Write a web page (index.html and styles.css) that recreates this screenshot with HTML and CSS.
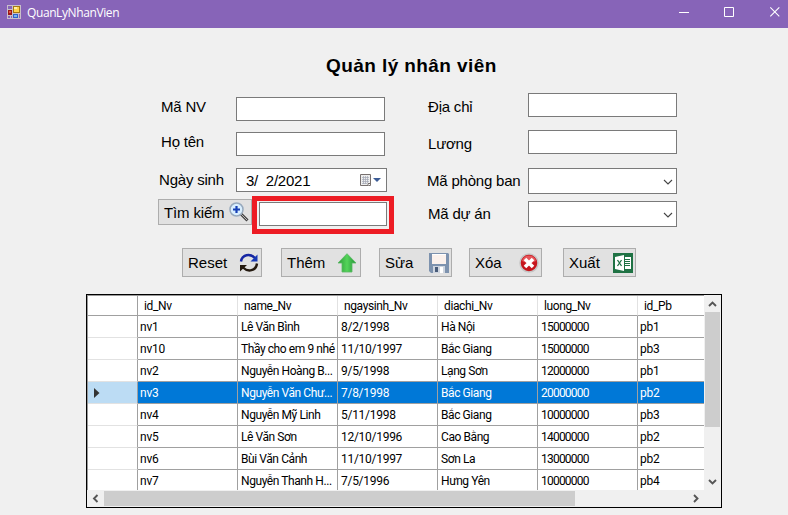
FILE: index.html
```html
<!DOCTYPE html>
<html lang="vi">
<head>
<meta charset="utf-8">
<title>QuanLyNhanVien</title>
<link rel="stylesheet" href="styles.css">
</head>
<body>
<header class="titlebar">
  <svg class="app-icon" width="14" height="14" viewBox="0 0 14 14">
    <path fill="#c9bfc9" d="M0 0h14v14H0z"/>
    <path fill="#8764b8" d="M1 1h4v3H1zM1 11h2v2H1zM4 11h1v2H4zM12 9h1v4h-1z"/>
    <path fill="#9b1717" d="M1 5h4v5H1z"/><path fill="#e05540" d="M2 6h2v2H2z"/>
    <path fill="#a67813" d="M6 1h7v7H6z"/><path fill="#ffd34d" d="M7 2h5v5H7z"/><path fill="#fff1a5" d="M7 2h3v2H7z"/>
    <path fill="#2f63c5" d="M6 9h5v4H6z"/><path fill="#79b1f5" d="M7 10h3v2H7z"/>
  </svg>
  <span class="caption">QuanLyNhanVien</span>
  <svg class="window-controls" width="104" height="28" viewBox="0 0 104 28" fill="none" stroke="#fff">
    <path d="M4 12.500h10M49.500 7.500h9v9h-9z"/><path d="M95.300 7.300l9 9M104.300 7.300l-9 9" stroke-width="1.100"/>
  </svg>
</header>
<main>
  <h1>Quản lý nhân viên</h1>
  <section class="form">
    <div class="left">
      <div class="field name-id"><label>Mã NV</label><input type="text"></div>
      <div class="field name-full"><label>Họ tên</label><input type="text"></div>
      <div class="field birth"><label>Ngày sinh</label>
        <div class="date"><span>3/&nbsp; 2/2021</span>
          <svg width="22" height="14" viewBox="0 0 22 14"><path d="M.5.500h10v11h-10z" fill="#eee" stroke="#77706f"/><path d="M2 3.500h7M2 5.500h7M2 7.500h7M2 9.500h5M3.500 2v8M5.500 2v8M7.500 2v7" stroke="#a3a7b5" stroke-width=".7"/><path d="M8 12V9.500h3" fill="#fff" stroke="#77706f"/><path d="M13 4h8L17 8z" fill="#3c5c96"/></svg>
        </div>
      </div>
      <div class="search">
        <button class="find">Tìm kiếm
          <svg width="20" height="20" viewBox="0 0 20 20"><path d="M12 12l6.500 6.500" stroke="#444" stroke-width="3"/><path d="M12 12l6 6" stroke="#bbb" stroke-width="1"/><circle cx="7.500" cy="7.500" r="6.500" fill="#d9efff" stroke="#97a9bd" stroke-width="1.500"/><path d="M7.500 4v7M4 7.500h7" stroke="#1740b5" stroke-width="2.200"/></svg>
        </button>
        <div class="highlight"><input type="text"></div>
      </div>
    </div>
    <div class="right">
      <div class="field address"><label>Địa chỉ</label><input type="text"></div>
      <div class="field salary"><label>Lương</label><input type="text"></div>
      <div class="field room"><label>Mã phòng ban</label><div class="combo"><svg width="10" height="6" viewBox="0 0 10 6"><path d="M1 1l4 4 4-4"/></svg></div></div>
      <div class="field project"><label>Mã dự án</label><div class="combo"><svg width="10" height="6" viewBox="0 0 10 6"><path d="M1 1l4 4 4-4"/></svg></div></div>
    </div>
  </section>
  <nav class="actions">
    <button class="wide reset">Reset
      <svg width="20" height="20" viewBox="0 0 20 20" fill="none" stroke-width="2.400"><path d="M2 8.500C3 1.500 11 0 16 5" stroke="#1525a2"/><path d="M18.500 1.500v7h-7z" fill="#1739b5"/><path d="M18 10.500c-1 7.500-9 9-14 4" stroke="#24190f"/><path d="M1 18.500V12h7z" fill="#24190f"/></svg>
    </button>
    <button class="wide add">Thêm
      <svg width="20" height="20" viewBox="0 0 20 20"><defs><linearGradient id="green"><stop stop-color="#2c9b37"/><stop offset=".5" stop-color="#55d45a"/><stop offset="1" stop-color="#239237"/></linearGradient></defs><path d="M10 .7l9 9.300h-4v9H5v-9H1z" fill="url(#green)" stroke="#5bb765" stroke-width=".8"/></svg>
    </button>
    <button class="edit">Sửa
      <svg width="20" height="20" viewBox="0 0 20 20"><path d="M0 0h19l1 1v19H2l-2-2z" fill="#7d92ae"/><path d="M3 1h14v10H3z" fill="#fbf1ec"/><path d="M3 1h14v1H3z" fill="#fff"/><path d="M4 13h12v7H4z" fill="#cfd5df"/><path d="M6 14h3v5H6z" fill="#485b78"/><path d="M11 14h3v6h-3z" fill="#fff"/></svg>
    </button>
    <button class="delete">Xóa
      <svg width="20" height="20" viewBox="0 0 20 20"><circle cx="10" cy="10" r="9" fill="#c6161d" stroke="#c5c5c5" stroke-width="1.500"/><path d="M3 8a7.200 7.200 0 0 1 14 0q-7 4-14 0" fill="#e6555a"/><path d="M6 6l8 8M14 6l-8 8" stroke="#fff" stroke-width="3.600"/></svg>
    </button>
    <button class="export">Xuất
      <svg width="20" height="20" viewBox="0 0 20 20"><path d="M0 0h20v20H0z" fill="#1f7244"/><path d="M2 4l9-2v16l-9-2z" fill="#fff"/><path d="M12 4h6v12h-6z" fill="#fff"/><path d="M12 6.500h5M12 8.500h5M12 10.500h5M12 12.500h5" stroke="#1f7244"/><path d="M4.500 7l4 6M8.500 7l-4 6" stroke="#1f7244" stroke-width="1.300"/></svg>
    </button>
  </nav>
  <section class="grid">
    <div class="viewport">
      <table>
        <colgroup><col class="marker"><col><col><col><col><col><col></colgroup>
        <thead><tr><th></th><th>id_Nv</th><th>name_Nv</th><th>ngaysinh_Nv</th><th>diachi_Nv</th><th>luong_Nv</th><th>id_Pb</th></tr></thead>
        <tbody>
          <tr><th></th><td>nv1</td><td>Lê Văn Bình</td><td>8/2/1998</td><td>Hà Nội</td><td>15000000</td><td>pb1</td></tr>
          <tr><th></th><td>nv10</td><td>Thầy cho em 9 nhé</td><td>11/10/1997</td><td>Bắc Giang</td><td>15000000</td><td>pb3</td></tr>
          <tr><th></th><td>nv2</td><td>Nguyễn Hoàng B...</td><td>9/5/1998</td><td>Lạng Sơn</td><td>12000000</td><td>pb1</td></tr>
          <tr class="selected"><th><svg width="6" height="10" viewBox="0 0 6 10"><path d="M0 0l5.500 5L0 10z" fill="#333"/></svg></th><td>nv3</td><td>Nguyễn Văn Chư...</td><td>7/8/1998</td><td>Bắc Giang</td><td>20000000</td><td>pb2</td></tr>
          <tr><th></th><td>nv4</td><td>Nguyễn Mỹ Linh</td><td>5/11/1998</td><td>Bắc Giang</td><td>10000000</td><td>pb3</td></tr>
          <tr><th></th><td>nv5</td><td>Lê Văn Sơn</td><td>12/10/1996</td><td>Cao Bằng</td><td>14000000</td><td>pb2</td></tr>
          <tr><th></th><td>nv6</td><td>Bùi Văn Cảnh</td><td>11/10/1997</td><td>Sơn La</td><td>13000000</td><td>pb2</td></tr>
          <tr><th></th><td>nv7</td><td>Nguyễn Thanh H...</td><td>7/5/1996</td><td>Hưng Yên</td><td>10000000</td><td>pb4</td></tr>
        </tbody>
      </table>
    </div>
    <div class="vscroll"><svg width="15" height="16" viewBox="0 0 15 16"><path d="M4 10l3.500-3.500L11 10"/></svg><div class="thumb"></div><svg width="15" height="16" viewBox="0 0 15 16"><path d="M4 5l3.500 3.500L11 5"/></svg></div>
    <div class="hscroll"><svg width="16" height="15" viewBox="0 0 16 15"><path d="M9.500 4L6 7.500 9.500 11"/></svg><div class="thumb"></div><svg width="16" height="15" viewBox="0 0 16 15"><path d="M6 4l3.500 3.500L6 11"/></svg></div>
    <div class="corner"></div>
  </section>
</main>
</body>
</html>
```
FILE: styles.css
```css
* { box-sizing: border-box; }
body { margin: 0; width: 788px; height: 515px; overflow: hidden; background: #f0f0f0; color: #000; font: 15px "Liberation Sans", Arial, sans-serif; }
.titlebar { height: 28px; display: flex; background: #8764b8; color: #fff; }
.app-icon { margin: 5px 6px 0 7px; }
.caption { font: 12px/26px "Open Sans", "Noto Sans", sans-serif; letter-spacing: -.4px; }
.window-controls { margin-left: auto; margin-right: 9px; overflow: visible; }
h1 { margin: 25px 0 0; padding-left: 326px; height: 40px; font-size: 19px; line-height: 26px; letter-spacing: .42px; white-space: nowrap; }
.form { display: flex; height: 155px; }
.left { width: 427px; padding-top: 4px; }
.field { display: flex; }
.left .field { padding-left: 161px; }
label { white-space: nowrap; line-height: 20px; letter-spacing: -.2px; }
.left label { width: 75px; }
.right label { width: 101px; padding-left: 1px; }
input { display: block; width: 149px; height: 24px; margin: 0; padding: 0 5px; border: 1px solid #7a7a7a; border-radius: 0; background: #fff; }
.name-id, .name-full { height: 35px; }
.name-full { height: 36px; }
.left .birth { height: 28px; padding-left: 159px; }
.left .birth label { width: 77px; padding-top: 2px; }
.date { display: flex; width: 151px; height: 24px; border: 1px solid #7a7a7a; background: #fff; padding-left: 9px; line-height: 24px; letter-spacing: -.25px; white-space: nowrap; }
.date svg { margin: 5px 4px 0 auto; }
.search { display: flex; padding-left: 158px; }
button { display: flex; justify-content: space-between; align-items: center; border: 1px solid #adadad; border-radius: 0; background: #e1e1e1; color: #000; font: 15px "Liberation Sans", Arial, sans-serif; white-space: nowrap; }
button svg { flex: none; }
.find { width: 94px; height: 26px; margin-top: 3px; padding: 0 2px 0 5px; letter-spacing: -.15px; }
.find svg { margin-top: -1px; }
.highlight { width: 142px; height: 38px; border: 5px solid #ed1c24; padding: 1px 2px; }
.highlight input { width: 128px; }
.right { width: 250px; }
.address { height: 37px; }
.salary { height: 38px; }
.room { height: 33px; }
.address label, .salary label { padding-top: 4px; }
.right .room label { padding: 3px 0 0; }
.project label { padding-top: 3px; }
.combo { width: 149px; height: 26px; border: 1px solid #7a7a7a; background: #fff; display: flex; justify-content: flex-end; align-items: center; padding: 2px 3px 0 0; }
.combo svg { fill: none; stroke: #444; stroke-width: 1.1; }
.actions { display: flex; height: 46px; padding-left: 182px; }
.actions button { width: 73px; height: 29px; padding: 1px 2px 1px 5px; }
.actions .wide { width: 80px; }
.actions .add { margin-left: 19px; padding-right: 3px; }
.edit { margin-left: 18px; }
.delete { margin-left: 17px; }
.export { margin-left: 21px; }
.grid { display: grid; grid-template-columns: 618px 15px; grid-template-rows: 196px 15px; width: 636px; height: 214px; margin-left: 86px; border: 1px solid #000; background: #f0f0f0; }
.viewport { overflow: hidden; background: #fff; border-left: 1px solid #999; border-top: 1px solid #999; width: 617px; height: 195px; }
table { table-layout: fixed; width: 650px; border-collapse: separate; border-spacing: 0; font: 12px/20px Roboto, "Liberation Sans", sans-serif; }
col { width: 100px; }
col.marker { width: 50px; }
th, td { height: 22px; padding: 0 0 0 3px; text-align: left; font-weight: 400; white-space: nowrap; border-right: 1px solid #a0a0a0; border-bottom: 1px solid #a0a0a0; }
td { letter-spacing: -.42px; }
td:nth-child(2) { padding-left: 2px; letter-spacing: -.2px; }
td:nth-child(4) { letter-spacing: -.28px; }
td:nth-child(6) { letter-spacing: -.78px; }
td:nth-child(7) { padding-left: 2px; letter-spacing: -.25px; }
thead th { height: 20px; line-height: 17px; padding: 2px 0 0 6px; letter-spacing: -.38px; border-right-color: #e2e2e2; }
thead th:first-child { border-right-color: #a0a0a0; }
tbody th { border-bottom-color: #e2e2e2; padding-left: 6px; }
tbody th svg { display: block; }
.selected td { background: #0078d7; background-clip: padding-box; color: #fff; }
.selected th { background: #bcdcf4; }
.vscroll, .hscroll { display: flex; background: #f0f0f0; }
.vscroll { flex-direction: column; padding-top: 1px; }
.vscroll .thumb { height: 115px; background: #cdcdcd; }
.vscroll svg:last-child { margin-top: auto; }
.hscroll .thumb { width: 471px; background: #cdcdcd; }
.hscroll { padding-left: 1px; }
.hscroll svg:last-child { margin-left: auto; margin-right: 1px; }
.vscroll svg, .hscroll svg { flex: none; fill: none; stroke: #555; stroke-width: 1.9; }
.corner { background: #f0f0f0; }
```
